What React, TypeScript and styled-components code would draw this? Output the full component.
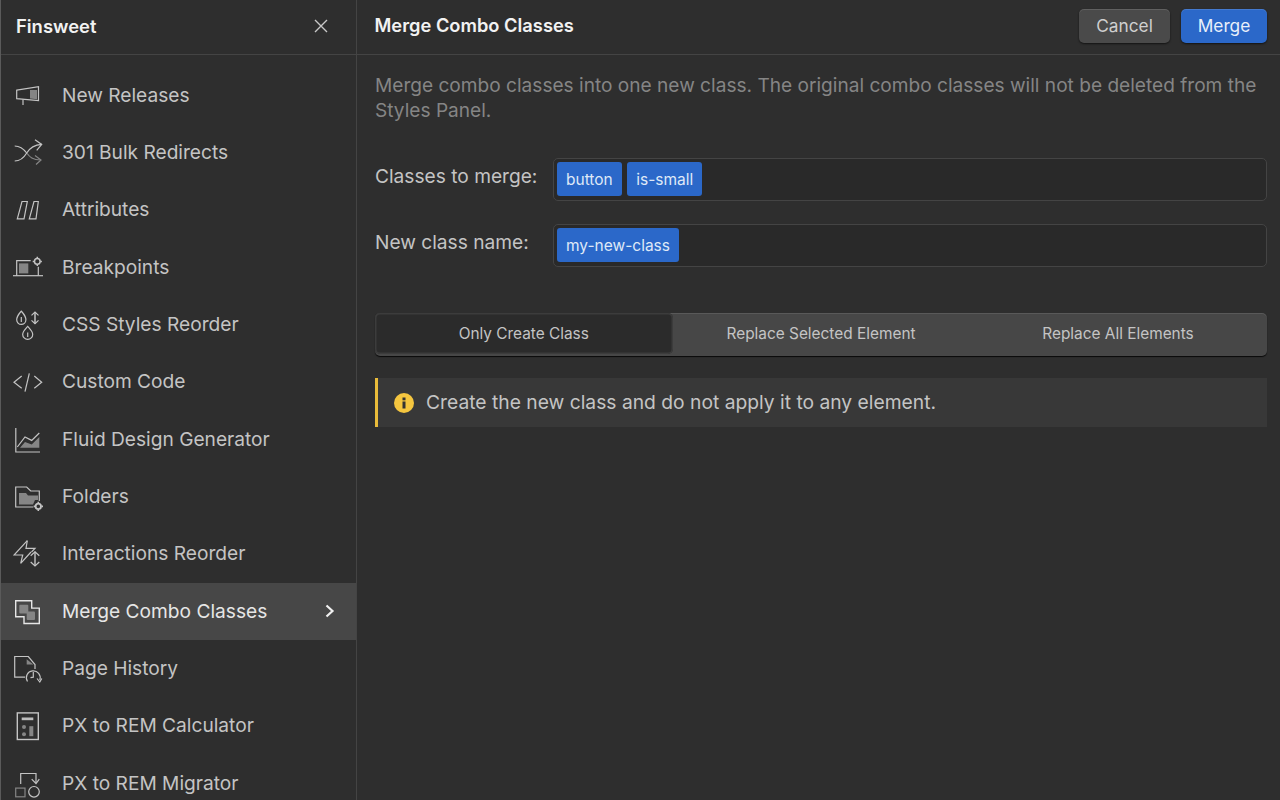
import React from 'react';
import styled, { createGlobalStyle } from 'styled-components';

const GlobalStyle = createGlobalStyle`
html, body {
    margin: 0;
    padding: 0;
    background: #2e2e2e;
}
* {
    box-sizing: border-box;
}
`;

const Svg = ({ children }: { children: React.ReactNode }) => (
    <svg width="30" height="30" viewBox="0 0 30 30" fill="none" stroke="currentColor" strokeWidth="1.2">
        {children}
    </svg>
);

const fillGray = '#858585';

const icons: Record<string, React.ReactNode> = {
    release: (
        <Svg>
            <path d="M3.700 9.200 25.500 5.700v14L3.700 17.700z" />
            <path d="M10 18.500V24" />
            <path d="M17 9h7v9.300l-7-.8z" fill={fillGray} stroke="none" />
        </Svg>
    ),
    shuffle: (
        <Svg>
            <path d="M1.700 8c6 0 9 3 12 7" />
            <path d="M13.700 15c3 4 6 7 14 7" stroke={fillGray} />
            <path d="M1.700 23c6 0 9-3 12-8s7-8 15-8.600" />
            <path d="M22 1.700l6.700 4.700-5 6" />
            <path d="M22 17.500l6 4.500-5 4.500" stroke={fillGray} />
        </Svg>
    ),
    attributes: (
        <Svg>
            <path d="M9 6.500h5.300L11 23.900H4.300z" />
            <path d="M21 6.500h4.300L23 23.900h-6.700z" />
        </Svg>
    ),
    breakpoints: (
        <Svg>
            <path d="M0 22.700h30" />
            <path d="M3.700 22.700V7.700h14" />
            <path d="M25.300 13.700v9" />
            <rect x="6" y="10.400" width="9.300" height="10" fill={fillGray} stroke="none" />
            <circle cx="24.300" cy="8.400" r="2.800" strokeWidth="1.500" />
            <path d="M24.300 3.800v1.600M24.300 11.400v1.600M19.700 8.400h1.600M27.300 8.400h1.600" strokeWidth="1.500" />
        </Svg>
    ),
    css: (
        <Svg>
            <path d="M8.300 1.100c2.600 3 4.600 5 4.600 8.700a4.600 4.600 0 0 1-9.200 0c0-3.700 2-5.700 4.600-8.700z" />
            <path d="M8.300 7v5" />
            <path d="M14.700 16.400c2.700 3 5 5 5 8a5 5 0 0 1-10 0c0-3 2.300-5 5-8z" />
            <path d="M14.700 22.500v4.500" />
            <path d="M22 2.100v11.600" strokeWidth="1.500" />
            <path d="M18.500 5.400 22 2.100l3.500 3.300M18.500 10.400l3.500 3.300 3.500-3.300" />
        </Svg>
    ),
    code: (
        <Svg>
            <path d="M8.700 9 1 15.300l7.700 6" />
            <path d="M16.300 6.300 12 24.700" />
            <path d="M21.300 9l7.400 6.300-7.400 6" />
        </Svg>
    ),
    fluid: (
        <Svg>
            <path d="M2.800 3v24H27" />
            <path d="M4.300 22 12 12l6.700 3.400L26.300 8" />
            <path d="M7 22.700 12 17l6.700 2.400 7.600-7.400v10.700z" fill={fillGray} stroke="none" />
        </Svg>
    ),
    folders: (
        <Svg>
            <path d="M20.300 25H2.700V5h11l4 4h8.600v10" />
            <path d="M6 22.400V11h7l2 2.400h10v4.600h-3l-2 4.400z" fill={fillGray} stroke="none" />
            <circle cx="25.300" cy="24.400" r="2.700" strokeWidth="1.800" />
            <path d="M25.300 19.800v1.500M25.300 27.500V29M20.700 24.400h1.500M28.400 24.400H30" strokeWidth="1.600" />
        </Svg>
    ),
    interactions: (
        <Svg>
            <path d="M14.300 1.700 1 16h8.700L7.700 24.300 18 13" />
            <path d="M14.300 1.700 13 9.300h9l-3.500 3.700" />
            <path d="M22 12.700V27" strokeWidth="1.400" />
            <path d="M17.700 16.700 22 12.700l4.300 4M17.700 23l4.300 4 4.300-4" />
        </Svg>
    ),
    merge: (
        <Svg>
            <path d="M2.700 3.800h16v7.300h7.600v15.400H11v-6.700H2.700z" strokeWidth="1.400" />
            <rect x="6.300" y="7.800" width="9" height="8.700" rx="1" fill={fillGray} stroke="none" />
            <rect x="13.700" y="14.500" width="8.300" height="8.600" rx="1" fill={fillGray} stroke="none" />
        </Svg>
    ),
    history: (
        <Svg>
            <path d="M12 23.200H1.700V2.500h13.600L22 10.500V15" />
            <path d="M13.700 5.200v5.300h6.600z" fill={fillGray} stroke="none" />
            <path d="M14.500 27.500a6.900 6.900 0 1 1 12.300-1.500" />
            <path d="M20.300 18v5.200l-2.800.5" />
            <path d="M24 24.500l2.800 3.500 2-3.500" />
        </Svg>
    ),
    calculator: (
        <Svg>
            <rect x="4.300" y="1.900" width="21" height="26.600" strokeWidth="1.400" />
            <rect x="8.700" y="6.500" width="11.600" height="2.700" fill="#bdbdbd" stroke="none" />
            <circle cx="11" cy="15.900" r="2" fill={fillGray} stroke="none" />
            <circle cx="11" cy="23.200" r="2" fill={fillGray} stroke="none" />
            <rect x="16.300" y="15.200" width="4" height="10" fill={fillGray} stroke="none" />
        </Svg>
    ),
    migrator: (
        <Svg>
            <path d="M7.700 15.100V4.500H23v9.500" />
            <path d="M18.700 10.100l4.300 4.400 3.300-4.400" />
            <rect x="2.700" y="19.100" width="9.300" height="8.700" stroke={fillGray} />
            <circle cx="21" cy="22.800" r="5.300" />
        </Svg>
    ),
};

const items = [
    { icon: 'release', label: 'New Releases' },
    { icon: 'shuffle', label: '301 Bulk Redirects' },
    { icon: 'attributes', label: 'Attributes' },
    { icon: 'breakpoints', label: 'Breakpoints' },
    { icon: 'css', label: 'CSS Styles Reorder' },
    { icon: 'code', label: 'Custom Code' },
    { icon: 'fluid', label: 'Fluid Design Generator' },
    { icon: 'folders', label: 'Folders' },
    { icon: 'interactions', label: 'Interactions Reorder' },
    { icon: 'merge', label: 'Merge Combo Classes', active: true },
    { icon: 'history', label: 'Page History' },
    { icon: 'calculator', label: 'PX to REM Calculator' },
    { icon: 'migrator', label: 'PX to REM Migrator' },
];

const App = () => {
    return (
        <Page>
            <GlobalStyle />
            <Sidebar>
                <SideHeader>
                    <Brand>Finsweet</Brand>
                    <CloseIcon width="16" height="16" viewBox="0 0 16 16">
                        <path d="M2 2l12 12M14 2 2 14" stroke="currentColor" strokeWidth="1.4" />
                    </CloseIcon>
                </SideHeader>
                <Menu>
                    {items.map((item) => (
                        <MenuItem key={item.label} $active={item.active}>
                            <MenuIcon>{icons[item.icon]}</MenuIcon>
                            <MenuLabel>{item.label}</MenuLabel>
                            {item.active && (
                                <Chevron width="12" height="16" viewBox="0 0 12 16">
                                    <path d="M2.500 2.500 8.500 8l-6 5.500" fill="none" stroke="currentColor" strokeWidth="2.200" />
                                </Chevron>
                            )}
                        </MenuItem>
                    ))}
                </Menu>
            </Sidebar>
            <Main>
                <TopBar>
                    <Title>Merge Combo Classes</Title>
                    <Actions>
                        <Button>Cancel</Button>
                        <Button $primary>Merge</Button>
                    </Actions>
                </TopBar>
                <Content>
                    <Description>
                        Merge combo classes into one new class. The original combo classes will not be deleted from the Styles Panel.
                    </Description>
                    <Form>
                        <Label>Classes to merge:</Label>
                        <TagInput>
                            <Tag>button</Tag>
                            <Tag>is-small</Tag>
                        </TagInput>
                        <Label>New class name:</Label>
                        <TagInput>
                            <Tag>my-new-class</Tag>
                        </TagInput>
                    </Form>
                    <Segments>
                        <Segment $active>Only Create Class</Segment>
                        <Segment>Replace Selected Element</Segment>
                        <Segment>Replace All Elements</Segment>
                    </Segments>
                    <Notice>
                        <svg width="20" height="20" viewBox="0 0 20 20">
                            <circle cx="10" cy="10" r="10" fill="#f5c63f" />
                            <rect x="8.500" y="8.500" width="3" height="7" fill="#333" />
                            <rect x="8.500" y="4.500" width="3" height="2.800" fill="#333" />
                        </svg>
                        <NoticeText>Create the new class and do not apply it to any element.</NoticeText>
                    </Notice>
                </Content>
            </Main>
        </Page>
    );
};

export default App;

const Page = styled.div`
display: flex;
width: 1280px;
height: 800px;
overflow: hidden;
background: #2e2e2e;
font-family: Inter, "Liberation Sans", sans-serif;
border-left: 1px solid #5a5a5a;
`;

const Sidebar = styled.aside`
width: 356px;
flex: 0 0 auto;
border-right: 1px solid #444;
display: flex;
flex-direction: column;
`;

const SideHeader = styled.div`
height: 55px;
flex: 0 0 auto;
display: flex;
align-items: center;
justify-content: space-between;
padding: 0 27px 3px 15px;
border-bottom: 1px solid #444;
`;

const Brand = styled.div`
color: #f2f2f2;
font-size: 18.4px;
font-weight: 600;
`;

const CloseIcon = styled.svg`
color: #c8c8c8;
`;

const Menu = styled.nav`
padding-top: 12px;
display: flex;
flex-direction: column;
`;

const MenuItem = styled.div<{ $active?: boolean }>`
height: 57.33px;
flex: 0 0 auto;
display: flex;
align-items: center;
padding-left: 12px;
padding-right: 20px;
color: ${(p) => (p.$active ? '#e6e6e6' : '#c4c4c4')};
background: ${(p) => (p.$active ? '#474747' : 'transparent')};
`;

const MenuIcon = styled.span`
width: 30px;
height: 30px;
display: block;
flex: 0 0 auto;
margin-right: 19px;
`;

const MenuLabel = styled.span`
flex: 1;
font-size: 19.15px;
padding-bottom: 2px;
`;

const Chevron = styled.svg`
color: #f0f0f0;
margin-bottom: 2px;
`;

const Main = styled.main`
flex: 1;
display: flex;
flex-direction: column;
min-width: 0;
`;

const TopBar = styled.header`
height: 55px;
flex: 0 0 auto;
display: flex;
align-items: center;
justify-content: space-between;
padding: 0 13px 3px 17.5px;
border-bottom: 1px solid #444;
`;

const Title = styled.h1`
margin: 0 0 1px;
color: #f2f2f2;
font-size: 18.3px;
font-weight: 600;
`;

const Actions = styled.div`
display: flex;
gap: 11px;
`;

const Button = styled.button<{ $primary?: boolean }>`
width: ${(p) => (p.$primary ? '86px' : '91px')};
height: 34px;
padding: 0 0 1px;
border: 0;
border-radius: 5px;
font-family: inherit;
font-size: 17.3px;
color: ${(p) => (p.$primary ? '#e8effa' : '#cfcfcf')};
background: ${(p) => (p.$primary ? '#2b68c9' : '#4a4a4a')};
box-shadow: inset 0 1px 0 rgba(255, 255, 255, 0.12), 0 1px 2px rgba(0, 0, 0, 0.6);
`;

const Content = styled.div`
padding: 18px 13px 0 18px;
`;

const Description = styled.p`
margin: 0;
color: #858585;
font-size: 19.1px;
line-height: 25px;
`;

const Form = styled.div`
display: grid;
grid-template-columns: 178px 1fr;
row-gap: 23px;
margin-top: 35px;
`;

const Label = styled.label`
color: #c4c4c4;
font-size: 19.15px;
line-height: 36px;
`;

const TagInput = styled.div`
height: 43px;
display: flex;
align-items: flex-start;
gap: 5.500px;
padding: 3px 3px 0;
background: #292929;
border: 1.5px solid #444;
border-radius: 5px;
`;

const Tag = styled.span`
height: 34px;
display: flex;
align-items: center;
padding: 0 9px;
border-radius: 3px;
background: #2b68c9;
color: #dfe8f7;
font-size: 15.5px;
`;

const Segments = styled.div`
display: grid;
grid-template-columns: 297.500px 297px 297px;
height: 43px;
margin-top: 46px;
background: #474747;
border-radius: 5px;
box-shadow: inset 0 1px 0 rgba(255, 255, 255, 0.1), 0 1px 1px rgba(0, 0, 0, 0.8);
`;

const Segment = styled.div<{ $active?: boolean }>`
display: flex;
align-items: center;
justify-content: center;
height: 41px;
padding-bottom: 1px;
font-size: 15.4px;
color: #c4c4c4;
background: ${(p) => (p.$active ? '#2b2b2b' : 'transparent')};
border-radius: 5px;
box-shadow: ${(p) => (p.$active ? 'inset 0 0 0 1.5px #3c3c3c' : 'none')};
`;

const Notice = styled.div`
display: flex;
align-items: center;
gap: 12px;
height: 49px;
margin-top: 22px;
padding-left: 16px;
background: #383838;
border-left: 3px solid #e9bb3a;
color: #c4c4c4;
font-size: 19.25px;
`;

const NoticeText = styled.span`
padding-bottom: 1px;
`;
